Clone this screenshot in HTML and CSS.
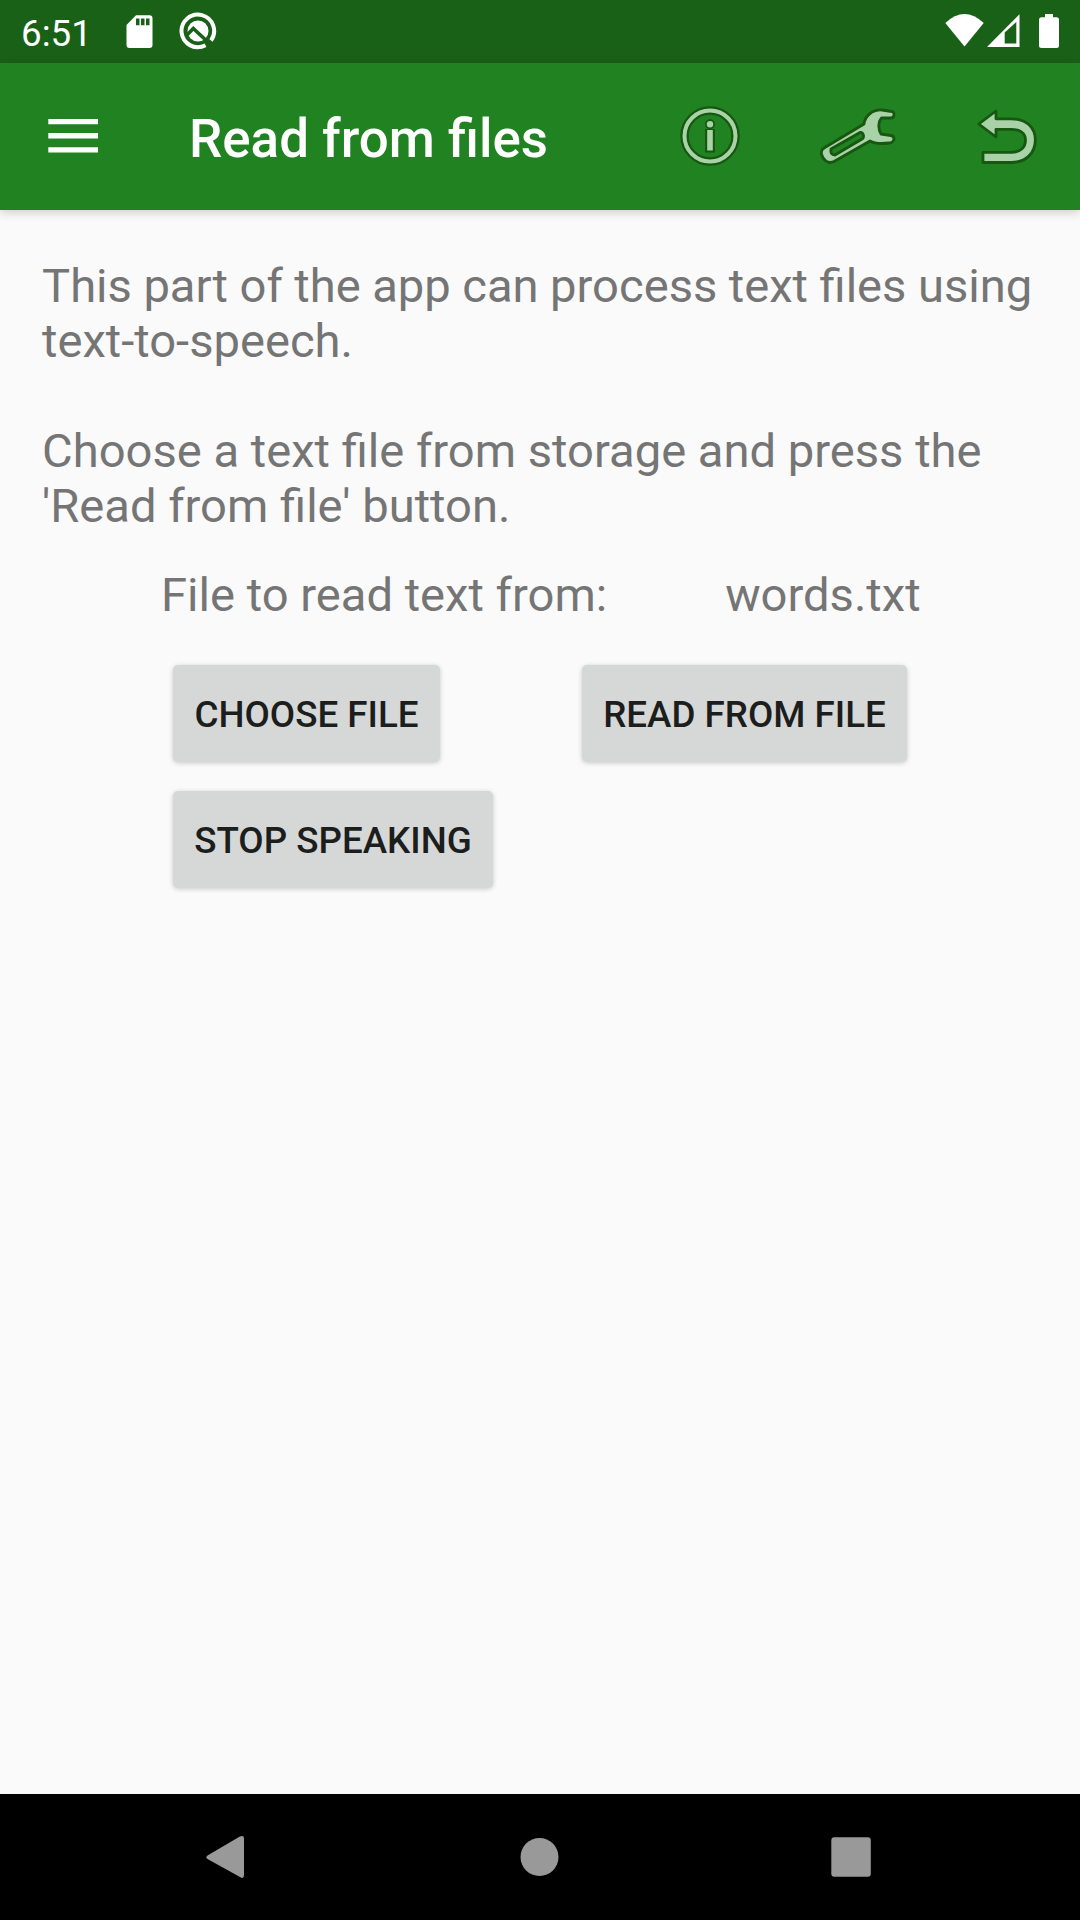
FILE: index.html
```html
<!DOCTYPE html>
<html lang="en">
<head>
<meta charset="utf-8">
<title>Read from files</title>
<link rel="stylesheet" href="styles.css">
</head>
<body>
<div class="screen">
  <div class="status">
    <span class="clock">6:51</span>
    <svg class="sd" width="28" height="34" viewBox="0 0 28 34"><path fill="#fff" fill-rule="evenodd" d="M10 .3H23.500Q26.500.3 26.500 3.300V30Q26.500 33 23.500 33H3.500Q.5 33 .5 30V10ZM10 3.500V10.300H13.500V3.500ZM15 3.500V10.300H18.500V3.500ZM20 3.500V10.300H23.500V3.500Z"/></svg>
    <svg class="debug" width="38" height="38" viewBox="0 0 38 38"><path fill="none" stroke="#fff" stroke-width="4" d="M26.500 33.300A16.300 16.300 0 1 1 32 28.500"/><circle cx="19" cy="19" r="10.500" fill="#fff"/><path fill="none" stroke="#1a6118" stroke-width="3.500" d="M8 23L14.300 16.500L30.500 31.500"/></svg>
    <svg class="wifi" width="40" height="33" viewBox="0 0 40 33"><path fill="#fff" d="M.3 9Q19.500-9 38.700 9L19.500 32.500Z"/></svg>
    <svg class="signal" width="33" height="33" viewBox="0 0 33 33"><path fill="#fff" fill-rule="evenodd" d="M0 33L32.500 .3V33ZM17.700 18.500V29.500H29.300V8Z"/></svg>
    <svg class="battery" width="20" height="34" viewBox="0 0 20 34"><path fill="#fff" d="M6 0H14V3.300H17.500Q20 3.300 20 5.800V31.500Q20 34 17.500 34H2.500Q0 34 0 31.500V5.800Q0 3.300 2.500 3.300H6Z"/></svg>
  </div>
  <header class="toolbar">
    <svg class="menu" width="50" height="34" viewBox="0 0 50 34"><path fill="#fff" d="M.3 0H50V5.300H.3ZM.3 14.100H50V19.400H.3ZM.3 28.300H50V33.600H.3Z"/></svg>
    <h1 class="title">Read from files</h1>
    <svg class="info" width="60" height="60" viewBox="0 0 60 60">
      <g fill="none" stroke="#17570f"><circle cx="30" cy="30" r="25.500" stroke-width="8.500"/><path stroke-width="10" d="M30 23V46.500"/></g><circle cx="30" cy="18.300" r="5" fill="#17570f"/>
      <circle cx="30" cy="30" r="25.500" fill="none" stroke="#a9d2a9" stroke-width="4"/><circle cx="30" cy="18.300" r="3.200" fill="#a9d2a9"/><path stroke="#a9d2a9" stroke-width="5.600" d="M30 24V44.500"/>
    </svg>
    <svg class="wrench" width="80" height="60" viewBox="0 0 80 60"><path fill="#a9d2a9" fill-rule="evenodd" stroke="#17570f" stroke-width="2.800" stroke-linejoin="round" d="M5 42L45 18C46 10 53 3.500 63 4L73 5.500Q75 6 75 8.500Q75 12 72 12H62.500C59 16 59 23 62 28L72 29.500Q75 30 75 33Q74 37 70 37C62 38 56 38 51 35L15 55.500C9 58.500 4 54 2.500 48Q1.500 44.500 5 42ZM12 43L41 26.500C44 26 46 31 43 33L16 49Q11 49 12 43Z"/></svg>
    <svg class="back" width="60" height="56" viewBox="-1 0 60 56"><path fill="#a9d2a9" stroke="#17570f" stroke-width="2.800" stroke-linejoin="round" d="M.8 15L18 2V9.800H33C48 9.800 57.300 18 57.300 31C57.300 44 48 53.500 33 53.500H5V43.300H33C43 43.300 47.500 38 47.500 31C47.500 24 42 20.300 33 20.300H18V28Z"/></svg>
  </header>
  <main class="content">
    <p class="para intro">This part of the app can process text files using<br>text-to-speech.</p>
    <p class="para">Choose a text file from storage and press the<br>'Read from file' button.</p>
    <div class="file-row"><span>File to read text from:</span><span>words.txt</span></div>
    <div class="button-row"><button class="btn choose">CHOOSE FILE</button><button class="btn read">READ FROM FILE</button></div>
    <div class="button-row"><button class="btn stop">STOP SPEAKING</button></div>
  </main>
  <nav class="nav">
    <svg width="40" height="44" viewBox="0 0 40 44"><path fill="#999" d="M1.500 20.500L33 2Q38 -.5 38 3.500V40Q38 44.500 34 42L1.500 24Q-1 22.300 1.500 20.500Z"/></svg>
    <svg width="40" height="40" viewBox="0 0 40 40"><circle cx="20.500" cy="20" r="19" fill="#999"/></svg>
    <svg width="40" height="40" viewBox="0 0 40 40"><rect x=".3" y=".2" width="39.500" height="39.600" rx="3" fill="#999"/></svg>
  </nav>
</div>
</body>
</html>
```
FILE: styles.css
```css
* { box-sizing: border-box; }
body { margin: 0; font-family: Roboto, sans-serif; }
svg { display: block; flex: none; }
.screen { display: flex; flex-direction: column; width: 1080px; height: 1920px; background: #fafafa; overflow: hidden; }
.status { display: flex; flex: none; height: 63px; background: #1a6118; color: #fff; padding-left: 21px; }
.clock { width: 105px; font-size: 36.75px; line-height: 43px; padding-top: 12px; white-space: nowrap; }
.sd { margin-top: 15px; }
.debug { margin: 12px 0 0 25px; }
.wifi { margin: 14px 0 0 auto; }
.signal { margin: 14px 0 0 2px; }
.battery { margin: 14px 21px 0 19px; }
.toolbar { display: flex; flex: none; height: 147px; background: #218222; color: #fff; padding-left: 48px; box-shadow: 0 2px 10px rgba(0,0,0,.2); position: relative; }
.menu { margin-top: 56px; }
.title { margin: 0 0 0 91px; width: 491px; padding-top: 46px; font-size: 52.9px; line-height: 61px; font-weight: 500; white-space: nowrap; }
.info { margin-top: 43px; }
.wrench { margin: 43px 0 0 79px; }
.back { margin: 46px 0 0 78px; }
.content { flex: 1; padding-top: 49px; color: #757575; font-size: 47.15px; line-height: 55px; }
.para { margin: 0 0 55px 42px; white-space: nowrap; }
.intro { word-spacing: -.2px; }
.file-row { display: flex; gap: 118px; margin: -21px 0 0 161px; height: 97px; white-space: nowrap; }
.button-row { display: flex; gap: 142px; margin: 0 0 29px 173px; }
.btn { height: 97px; padding: 0; border: 0; border-radius: 5px; background: #d6d8d7; color: #1c1d1d; font: 500 36.75px/99px Roboto, sans-serif; white-space: nowrap; box-shadow: 0 1px 5px rgba(0,0,0,.2); }
.choose { width: 267px; }
.read { width: 325px; }
.stop { width: 320px; }
.nav { display: flex; flex: none; align-items: center; justify-content: space-between; height: 126px; background: #000; padding: 0 209px 0 206px; }
```
